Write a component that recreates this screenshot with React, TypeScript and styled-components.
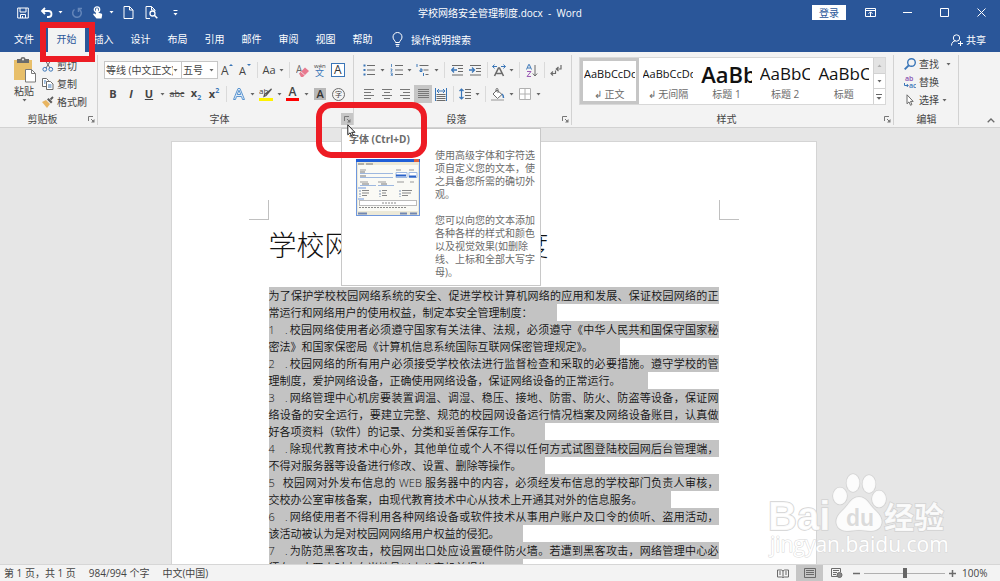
import React from 'react';
import styled, { createGlobalStyle, css } from 'styled-components';

const BLUE = '#2a5699';
const INK = '#444444';
const MUTED = '#6b6b6b';
const ACCENT = '#3a76b8';
const RED = '#ed1c24';

const GlobalStyle = createGlobalStyle`
  * { box-sizing: border-box; }
  body {
    margin: 0;
    font-family: "Open Sans", "Noto Sans CJK SC", sans-serif;
    font-size: 10px;
    line-height: 14px;
    color: ${INK};
  }
  button, select, input { font: inherit; color: inherit; margin: 0; padding: 0; border: 0; background: none; }
  svg { display: block; flex: none; }
`;

/* ---------- shell ---------- */

const Shell = styled.div`
  display: flex;
  flex-direction: column;
  height: 100vh;
  overflow: hidden;
`;

const Header = styled.header`
  background: ${BLUE};
  color: #ffffff;
`;

const TitleBar = styled.div`
  display: grid;
  grid-template-columns: 1fr auto 1fr;
  align-items: center;
  height: 25px;
`;

const DocTitle = styled.h1`
  margin: 0;
  font-size: 10px;
  font-weight: 400;
  line-height: 14px;
`;

const QuickAccess = styled.div`
  display: flex;
  align-items: center;
  padding-left: 10px;
`;

const WindowControls = styled.div`
  display: flex;
  align-items: center;
  justify-content: flex-end;
`;

const IconButton = styled.button<{ $w?: number }>`
  display: flex;
  align-items: center;
  justify-content: center;
  flex: none;
  width: ${(p) => p.$w ?? 18}px;
  height: 18px;
`;

const SignIn = styled.button`
  width: 34px;
  height: 15px;
  margin-right: 6px;
  background: #ffffff;
  color: ${BLUE};
  line-height: 14px;
`;

/* ---------- tabs ---------- */

const TabBar = styled.nav`
  display: flex;
  align-items: stretch;
  height: 27px;
  padding-top: 2px;
`;

const Tab = styled.button<{ $active?: boolean; $w?: number }>`
  position: relative;
  width: ${(p) => p.$w ?? 37}px;
  padding-bottom: 1px;
  ${(p) =>
    p.$active &&
    css`
      background: #f3f3f3;
      color: ${BLUE};
    `}
`;

const TabMark = styled.span`
  position: absolute;
  z-index: 5;
  inset: -5px -10px -10px -8px;
  border: 6px solid ${RED};
`;

const TellMe = styled.button`
  display: flex;
  align-items: center;
  gap: 7px;
  padding-left: 10px;
`;

const Share = styled.button`
  display: flex;
  align-items: center;
  gap: 3px;
  margin-left: auto;
  padding-right: 14px;
`;

/* ---------- ribbon ---------- */

const Ribbon = styled.div`
  display: flex;
  height: 76px;
  background: #f3f3f3;
  border-bottom: 1px solid #d2d2d2;
`;

const Group = styled.section<{ $w: number }>`
  position: relative;
  display: flex;
  flex-direction: column;
  justify-content: space-between;
  flex: none;
  width: ${(p) => p.$w}px;
  &::after {
    content: '';
    position: absolute;
    right: 0;
    top: 3px;
    bottom: 2px;
    width: 1px;
    background: #d2d2d2;
  }
`;

const GroupRows = styled.div`
  display: flex;
  flex-direction: column;
  gap: 6px;
  padding: 9px 0 0 6px;
`;

const Row = styled.div`
  display: flex;
  align-items: center;
  height: 18px;
`;

const GroupFoot = styled.div`
  display: flex;
  align-items: center;
  height: 16px;
`;

const GroupName = styled.h2`
  flex: 1;
  margin: 0;
  font-size: 10px;
  font-weight: 400;
  line-height: 14px;
  text-align: center;
`;

const Launcher = styled.button<{ $hot?: boolean }>`
  display: flex;
  align-items: center;
  justify-content: center;
  width: 12px;
  height: 12px;
  margin-right: 1px;
  background: ${(p) => (p.$hot ? '#c6c6c6' : 'transparent')};
`;

const Anchor = styled.div`
  position: relative;
`;

const Sep = styled.span`
  flex: none;
  width: 1px;
  height: 16px;
  margin: 0 3px;
  background: #dadada;
`;

const ToolButton = styled(IconButton)<{ $on?: boolean }>`
  background: ${(p) => (p.$on ? '#c6c6c6' : 'transparent')};
`;

const Letter = styled.span<{ $bold?: boolean; $italic?: boolean; $line?: string; $size?: number }>`
  font-size: ${(p) => p.$size ?? 11}px;
  line-height: 14px;
  font-weight: ${(p) => (p.$bold ? 700 : 400)};
  font-style: ${(p) => (p.$italic ? 'italic' : 'normal')};
  text-decoration: ${(p) => p.$line ?? 'none'};
  sub, sup { font-size: 7px; line-height: 7px; color: ${ACCENT}; }
`;

const Combo = styled.label<{ $w: number }>`
  display: flex;
  align-items: center;
  width: ${(p) => p.$w}px;
  height: 18px;
  padding-right: 3px;
  border: 1px solid #c6c6c6;
  background: #ffffff;
  & + & { border-left: 0; }
  select {
    flex: 1;
    min-width: 0;
    padding-left: 1px;
    appearance: none;
    overflow: hidden;
    line-height: 14px;
    text-overflow: clip;
  }
`;

const Clipboard = styled.div`
  display: flex;
  gap: 6px;
  padding: 5px 0 0 12px;
`;

const PasteButton = styled.button`
  display: flex;
  flex-direction: column;
  align-items: center;
  width: 24px;
  gap: 1px;
  line-height: 14px;
`;

const Stack = styled.div`
  display: flex;
  flex-direction: column;
`;

const LabelButton = styled.button`
  display: flex;
  align-items: center;
  gap: 3px;
  height: 18px;
  white-space: nowrap;
`;

const SplitCaret = styled.span`
  display: flex;
  padding-left: 4px;
`;

const Gallery = styled.div`
  display: flex;
  height: 48px;
  margin: 5px 0 0 7px;
  width: 307px;
  border: 1px solid #d8d8d8;
  background: #ffffff;
`;

const StyleCard = styled.button<{ $selected?: boolean }>`
  display: flex;
  flex-direction: column;
  justify-content: space-between;
  flex: 1;
  min-width: 0;
  padding: 2px 1px 0;
  overflow: hidden;
  border: 3px solid ${(p) => (p.$selected ? '#c6c6c6' : 'transparent')};
`;

const Sample = styled.span<{ $size: number; $bold?: boolean }>`
  display: block;
  overflow: hidden;
  width: 100%;
  height: 22px;
  font-size: ${(p) => p.$size}px;
  font-weight: ${(p) => (p.$bold ? 600 : 400)};
  line-height: 22px;
  color: #111111;
  text-align: left;
  white-space: nowrap;
`;

const StyleName = styled.span`
  width: 100%;
  color: ${MUTED};
  line-height: 14px;
  text-align: center;
  white-space: nowrap;
`;

const GalleryScroll = styled.div`
  display: flex;
  flex-direction: column;
  width: 12px;
  border-left: 1px solid #d2d2d2;
`;

const ScrollCell = styled.button<{ $off?: boolean }>`
  display: flex;
  align-items: center;
  justify-content: center;
  flex: 1;
  background: ${(p) => (p.$off ? '#e3e3e3' : '#ffffff')};
  & + & { border-top: 1px solid #d2d2d2; }
`;

const EditStack = styled(Stack)`
  padding: 3px 0 0 10px;
`;

const Collapse = styled.button`
  display: flex;
  align-self: flex-end;
  margin: 0 5px 4px auto;
`;

/* ---------- tooltip and callout ---------- */

const Callout = styled.span`
  position: absolute;
  z-index: 12;
  left: -25px;
  top: -11px;
  width: 111px;
  height: 56px;
  border: 6px solid ${RED};
  border-radius: 15px;
`;

const Pointer = styled.span`
  position: absolute;
  z-index: 13;
  left: 6px;
  top: 11px;
`;

const Tooltip = styled.div`
  position: absolute;
  z-index: 10;
  left: 0;
  top: 15px;
  width: 200px;
  height: 158px;
  padding: 3px 7px;
  border: 1px solid #c8c8c8;
  background: #ffffff;
  color: ${MUTED};
`;

const TooltipTitle = styled.strong`
  display: block;
  line-height: 14px;
`;

const TooltipBody = styled.div`
  display: grid;
  grid-template-columns: 64px 100px;
  gap: 15px;
  padding: 3px 0 0 7px;
  svg { margin-top: 10px; }
`;

const TooltipText = styled.p`
  margin: 0 0 13px;
  line-height: 13px;
  white-space: nowrap;
`;

/* ---------- document ---------- */

const Workspace = styled.main`
  position: relative;
  display: flex;
  align-items: flex-start;
  justify-content: center;
  flex: 1;
  min-height: 0;
  overflow: hidden;
  padding: 13px 13px 0 0;
  background: #e6e6e6;
`;

const Sheet = styled.article`
  flex: 0 1 646px;
  padding: 58px 0 40px;
  border: 1px solid #d4d4d4;
  border-bottom: 0;
  background: #ffffff;
`;

const MarginMarks = styled.div`
  display: flex;
  justify-content: space-between;
  padding: 0 77px;
`;

const Corner = styled.span<{ $side: 'left' | 'right' }>`
  width: 20px;
  height: 20px;
  border-bottom: 1px solid #c0c0c0;
  ${(p) => (p.$side === 'left' ? 'border-right' : 'border-left')}: 1px solid #c0c0c0;
`;

const Heading = styled.h3`
  margin: 0 0 18px;
  padding: 0 97px;
  font-family: KaiTi, STKaiti, "Noto Sans CJK SC", serif;
  font-size: 28px;
  font-weight: 300;
  line-height: 49px;
  color: #111111;
  white-space: nowrap;
`;

const Copy = styled.div`
  width: 450px;
  margin: 0 auto;
  font-size: 11px;
  font-weight: 350;
  line-height: 17px;
  color: #111111;
`;

const Line = styled.p<{ $selected?: number }>`
  width: ${(p) => (p.$selected ? `${p.$selected}px` : '100%')};
  height: 17px;
  margin: 0;
  background: #c3c3c3;
  white-space: nowrap;
  text-align: left;
  text-align-last: ${(p) => (p.$selected ? 'left' : 'justify')};
`;

const Marker = styled.span<{ $w: number }>`
  display: inline-flex;
  justify-content: space-between;
  width: ${(p) => p.$w}px;
  padding-right: 2px;
  text-align-last: left;
`;

const Watermark = styled.div`
  position: absolute;
  right: 48px;
  bottom: 0;
`;

/* ---------- status bar ---------- */

const StatusBar = styled.footer`
  display: flex;
  align-items: center;
  flex: none;
  height: 17px;
  padding-left: 4px;
  border-top: 1px solid #d6d6d6;
  background: #f3f3f3;
  white-space: nowrap;
`;

const StatusItems = styled.div`
  display: flex;
  gap: 13px;
`;

const ViewControls = styled.div`
  display: flex;
  align-items: center;
  height: 16px;
  margin-left: auto;
`;

const ViewButton = styled.button<{ $on?: boolean }>`
  display: flex;
  align-items: center;
  justify-content: center;
  width: 27px;
  height: 16px;
  background: ${(p) => (p.$on ? '#c6c6c6' : 'transparent')};
`;

const ZoomRange = styled.input`
  appearance: none;
  width: 81px;
  height: 14px;
  margin: 0 2px;
  background: linear-gradient(#b0b0b0, #b0b0b0) center / 100% 1px no-repeat;
  &::-webkit-slider-thumb {
    appearance: none;
    width: 4px;
    height: 10px;
    background: #666666;
  }
`;

const ZoomValue = styled.output`
  width: 38px;
  margin-left: 5px;
`;

/* ---------- icons ---------- */

const Svg = ({ w, h, children, stroke = MUTED }: { w: number; h: number; children: React.ReactNode; stroke?: string }) => (
  <svg width={w} height={h} viewBox={`0 0 ${w} ${h}`} fill="none" stroke={stroke} strokeWidth={1} aria-hidden="true">
    {children}
  </svg>
);

const Caret = ({ color = '#666666' }: { color?: string }) => (
  <Svg w={5} h={3} stroke="none">
    <path d="M0.5 0h4L2.5 2.6z" fill={color} />
  </Svg>
);

const Drop = ({ label, color }: { label: string; color?: string }) => (
  <IconButton $w={9} aria-label={label}>
    <Caret color={color} />
  </IconButton>
);

const LauncherIcon = () => (
  <Svg w={7} h={7} stroke="#777777">
    <path d="M.5 5V.5H5M3 3l2.500 2.500" />
    <path d="M6.500 3v3.500H3z" fill="#777777" stroke="none" />
  </Svg>
);

const SaveIcon = () => (
  <Svg w={12} h={12} stroke="#ffffff">
    <path d="M.7 1h10.600v10H.7zM3 1v4h6V1M3.500 11V7.500h5V11M5.500 9v2" />
  </Svg>
);
const UndoIcon = () => (
  <Svg w={13} h={11} stroke="#ffffff">
    <path d="M2 4h6.500a3 3 0 0 1 0 6H7M5 1L2 4l3 3" strokeWidth={1.8} />
  </Svg>
);
const RedoIcon = () => (
  <Svg w={12} h={12} stroke="#6486ba">
    <path d="M8 2.200A4.300 4.300 0 1 1 3.500 2.500M7.500 5V1.500H11" strokeWidth={1.5} />
  </Svg>
);
const TouchIcon = () => (
  <Svg w={12} h={13} stroke="#ffffff">
    <circle cx="5" cy="3.500" r="2.700" strokeWidth={1.300} />
    <path d="M3.800 3.500a1.200 1.200 0 0 1 2.400 0V6.800l3 .8c.8.2 1 .7 1 1.400L9.500 12.500h-5L1.300 8.700c-.5-.9.6-1.700 1.400-1L3.800 8.600z" fill="#ffffff" stroke="none" />
  </Svg>
);
const PageIcon = () => (
  <Svg w={11} h={13} stroke="#ffffff">
    <path d="M1 .5h5.500l3.500 3.500v8.500H1zM6.500.5V4H10" />
  </Svg>
);
const PreviewIcon = () => (
  <Svg w={13} h={13} stroke="#ffffff">
    <path d="M5 12.500H1V.5h5.500L10 4v1M6.500.5V4H10" />
    <circle cx="7.500" cy="7.500" r="2.500" strokeWidth={1.3} />
    <path d="M9.300 9.300l3 3" strokeWidth={1.600} />
  </Svg>
);
const CustomizeIcon = () => (
  <Svg w={5} h={6} stroke="#ffffff">
    <path d="M.5.5h4" />
    <path d="M.5 3h4L2.500 5.500z" fill="#ffffff" stroke="none" />
  </Svg>
);
const RibbonOptionsIcon = () => (
  <Svg w={11} h={9} stroke="#ffffff">
    <path d="M.5.5h10v8H.5zM.5 2.500h10M5.500 8V4M3.500 5.800l2-2 2 2" />
  </Svg>
);
const BulbIcon = () => (
  <Svg w={13} h={15} stroke="#ffffff">
    <path d="M4.500 10.500c0-2-2.500-2.500-2.500-5.500a4.500 4.500 0 0 1 9 0c0 3-2.500 3.500-2.500 5.500zM4.500 12.500h4M5 14.200h3" />
  </Svg>
);
const PersonIcon = () => (
  <Svg w={12} h={12} stroke="#ffffff">
    <circle cx="5.500" cy="4" r="3.200" />
    <path d="M.5 11.500c0-3 2-4.500 4-4.700M9.500 7v5M7 9.500h5" />
  </Svg>
);
const PasteIcon = () => (
  <Svg w={24} h={26} stroke="none">
    <rect x="2" y="3" width="18" height="20" fill="#e8bf6a" />
    <path d="M5 2h3.500a2.500 2 0 0 1 5 0H17v4H5z" fill="#6b6b6b" />
    <circle cx="11" cy="2.500" r="1" fill="#f3f3f3" />
    <path d="M13.500 12.500h6l4 4v8.500h-10z" fill="#ffffff" stroke="#7a7a7a" />
    <path d="M19.500 12.500v4h4" stroke="#7a7a7a" />
  </Svg>
);
const CutIcon = () => (
  <Svg w={12} h={12}>
    <path d="M3 0l5 8M9 0L4 8" />
    <circle cx="2.800" cy="9.300" r="1.900" stroke={ACCENT} />
    <circle cx="8.800" cy="9.300" r="1.900" stroke={ACCENT} />
  </Svg>
);
const CopyIcon = () => (
  <Svg w={12} h={12}>
    <path d="M.5.5h4l2 2V8.500h-6z" fill="#ffffff" />
    <path d="M4.500 3.500h4l2.500 2.500v5.500H4.500z" fill="#ffffff" />
    <path d="M6 7h3.500M6 9h3.500M2 3h2M2 5h1.500" stroke={ACCENT} />
  </Svg>
);
const BrushIcon = () => (
  <Svg w={12} h={12} stroke="none">
    <path d="M0 6l4-2 4 4-3 4z" fill="#e8b562" />
    <path d="M5 3.500l1.500-1.500 4 4L9 7.500z" fill="#5a5a5a" />
    <path d="M8.500 3.500L11 1" stroke="#5a5a5a" strokeWidth={1.800} />
  </Svg>
);
const EraserIcon = () => (
  <Svg w={13} h={13} stroke="none">
    <text x="0" y="9" fontSize="10" fill={MUTED}>A</text>
    <path d="M3 9.500l6-6 4 3.500-6 6H5z" fill="#e8798f" />
    <path d="M4.800 7.700l4 3.500" stroke="#f3f3f3" strokeWidth={0.800} />
  </Svg>
);
const PhoneticIcon = () => (
  <Svg w={14} h={14} stroke="none">
    <text x="1" y="5" fontSize="6" fill={INK}>wén</text>
    <text x="2" y="13" fontSize="9" fill={ACCENT}>文</text>
  </Svg>
);
const BoxedA = () => (
  <Svg w={14} h={14} stroke={ACCENT}>
    <rect x=".5" y=".5" width="13" height="13" fill="#ffffff" />
    <text x="3" y="11" fontSize="12" stroke="none" fill="#333333">A</text>
  </Svg>
);
const GrowA = ({ down }: { down?: boolean }) => (
  <Svg w={14} h={14} stroke="none">
    <text x="1" y="12" fontSize={down ? 11 : 12} fill={INK}>A</text>
    <path d={down ? 'M9 1h4l-2 2z' : 'M9 3h4l-2-2z'} fill={ACCENT} />
  </Svg>
);
const OutlineA = () => (
  <Svg w={14} h={14} stroke="#5b95d0">
    <path d="M1.500 12.500L6 1.500h2l4.500 11h-2L9.500 9.500h-5l-1 3zM5.200 7.500h3.600L7 3.200z" fill="#e2eefa" />
  </Svg>
);
const HighlightIcon = () => (
  <Svg w={14} h={14} stroke="none">
    <text x="0" y="7" fontSize="8" fill={INK}>ab</text>
    <path d="M12.500 2L7 8.500l-2 1 .5-2z" stroke="#555555" strokeWidth={1.200} />
    <rect x="0" y="11" width="14" height="3" fill="#fff200" />
  </Svg>
);
const FontColorIcon = () => (
  <Svg w={14} h={14} stroke="none">
    <text x="2.500" y="9" fontSize="12" fontWeight="600" fill={INK}>A</text>
    <rect x="0" y="11" width="13" height="3" fill="#ff0000" />
  </Svg>
);
const ShadeA = () => (
  <Svg w={12} h={12} stroke="none">
    <rect width="12" height="12" fill="#b8b8b8" />
    <text x="2.500" y="10" fontSize="11" fontWeight="600" fill="#333333">A</text>
  </Svg>
);
const CircledChar = () => (
  <Svg w={13} h={13}>
    <circle cx="6.500" cy="6.500" r="6" />
    <text x="3" y="9" fontSize="7" stroke="none" fill={INK}>字</text>
  </Svg>
);
const BulletsIcon = () => (
  <Svg w={13} h={12}>
    <path d="M4 1.500h8M4 6h8M4 10.500h8" />
    <path d="M.5 1.500h2M.5 6h2M.5 10.500h2" stroke={ACCENT} strokeWidth={2} />
  </Svg>
);
const NumberingIcon = () => (
  <Svg w={13} h={12}>
    <path d="M5 1.500h8M5 6h8M5 10.500h8" />
    <path d="M1.500 0v3M.5 5h1.500v1L.8 7.200h1.500M.5 9h1.700v3H.5M1 10.500h1" stroke={ACCENT} strokeWidth={0.800} />
  </Svg>
);
const MultilevelIcon = () => (
  <Svg w={14} h={12}>
    <path d="M3.500 1.500h9M7.500 6h5M9.500 10.500h3" />
    <path d="M1 0v3M4 5h2v2.500H4V6h2M7.500 9v3" stroke={ACCENT} />
  </Svg>
);
const IndentIcon = ({ right }: { right?: boolean }) => (
  <Svg w={13} h={11}>
    <path d="M1 .5h11M7 3.500h5M7 6.500h5M1 10h11" />
    <path d={right ? 'M0 5h5M3 2.500L5.500 5 3 7.500' : 'M1 5h5M3 2.500L.7 5 3 7.500'} stroke={ACCENT} strokeWidth={1.300} />
  </Svg>
);
const AsianLayoutIcon = () => (
  <Svg w={14} h={13}>
    <path d="M2.500 12L6.500 4h1l4 8M4.500 9.500h5" strokeWidth={1.600} />
    <path d="M.5 2.500h4.500M9 2.500h4.500M2.500.5L.7 2.500l1.800 2M11.500.5l1.800 2-1.800 2" stroke={ACCENT} />
  </Svg>
);
const SortIcon = () => (
  <Svg w={12} h={13}>
    <path d="M.5 5.500L2.700.5h.6L5.500 5.500M1.500 4h3" stroke={ACCENT} />
    <path d="M1 7.500h4l-4 5h4" stroke="#9b5bb5" />
    <path d="M9 1v11M6.800 9.500L9 12l2.200-2.500" />
  </Svg>
);
const MarksIcon = () => (
  <Svg w={12} h={12}>
    <path d="M11 1v4H6.500M8.500 3L6.300 5l2.200 2M5.500 6.500v3H1M3 7.500l-2 2 2 2" strokeWidth={1.200} />
  </Svg>
);
const AlignIcon = ({ kind }: { kind: 'left' | 'center' | 'right' | 'full' }) => {
  const d = {
    left: 'M0 .5h10M0 3.500h7M0 6.500h10M0 9.500h7',
    center: 'M0 .5h10M2 3.500h6M0 6.500h10M2 9.500h6',
    right: 'M0 .5h10M3 3.500h7M0 6.500h10M3 9.500h7',
    full: 'M0 .5h11M0 2.500h11M0 4.500h11M0 6.500h11M0 8.500h11',
  }[kind];
  return (
    <Svg w={11} h={10} stroke="#777777">
      <path d={d} />
    </Svg>
  );
};
const DistributeIcon = () => (
  <Svg w={12} h={13}>
    <path d="M1.500 6.500h9M1.500 8.500h9M1.500 10.500h9M1.500 12.500h9" />
    <path d="M.5 0v13M11.500 0v13M2 3h8M4 1L2 3l2 2M8 1l2 2-2 2" stroke={ACCENT} />
  </Svg>
);
const SpacingIcon = () => (
  <Svg w={12} h={12}>
    <path d="M6 1.500h6M6 4.500h6M6 7.500h6M6 10.500h6" />
    <path d="M2.500 1v10M.5 3l2-2 2 2M.5 9l2 2 2-2" stroke={ACCENT} strokeWidth={1.200} />
  </Svg>
);
const BucketIcon = () => (
  <Svg w={14} h={13}>
    <path d="M6 2l5 4.500-4.500 4L2 6zM5 4V1.500a1 1 0 0 1 2 0V5" fill="#ffffff" />
    <path d="M11 6c1.500 1 1.500 2 1.500 4" stroke={ACCENT} strokeWidth={1.500} />
    <path d="M0 12h13" strokeWidth={1.500} stroke="#b5b5b5" />
  </Svg>
);
const BordersIcon = () => (
  <Svg w={12} h={12} stroke="#b0b0b0">
    <path d="M.5.500h11v11H.5zM6 .5v11M.5 6h11" fill="#ffffff" />
  </Svg>
);
const FindIcon = () => (
  <Svg w={12} h={12} stroke={ACCENT}>
    <circle cx="7.500" cy="4.500" r="3.800" strokeWidth={1.400} />
    <path d="M4.700 7.300L.7 11.300" strokeWidth={1.900} />
  </Svg>
);
const ReplaceIcon = () => (
  <Svg w={12} h={13} stroke="none">
    <text x="1" y="5" fontSize="7" fontWeight="600" fill="#8a4fb0">ab</text>
    <text x="5" y="12" fontSize="7" fontWeight="600" fill={ACCENT}>ac</text>
    <path d="M.5 7v2.500H4M2.800 8l1.500 1.500L2.800 11" stroke={ACCENT} />
  </Svg>
);
const SelectIcon = () => (
  <Svg w={12} h={12}>
    <path d="M3 .8v9l2-1.900 1.500 3.400 1.400-.7L6.500 7.400h2.700z" fill="#ffffff" />
  </Svg>
);
const PointerIcon = () => (
  <Svg w={10} h={13} stroke="#222222">
    <path d="M.8.8v10l2.300-2 1.600 3.600 1.600-.8-1.600-3.300h3.200z" fill="#ffffff" />
  </Svg>
);

const DialogThumb = () => (
  <Svg w={64} h={57} stroke="none">
    <rect x=".5" y=".5" width="63" height="56" fill="#ece9d8" stroke="#6f97dd" />
    <rect width="64" height="3" fill="#1f5fd8" />
    <rect x="58" y="0" width="5" height="3" fill="#e0603c" />
    <rect x="2" y="6" width="60" height="46" fill="#fafaf5" />
    <path d="M2 5h6M10 5h7" stroke="#777777" />
    <path d="M4 11h6M40 11h5M53 11h5M4 23h8M22 23h8M41 23h7M54 23h4" stroke="#999999" />
    <path d="M4 14.500h33M4 18.500h33M4 26.500h16M22 26.500h16" stroke="#9db8e0" />
    <path d="M4 13h5M4 17h6M6 25h7M25 25h6" stroke="#777777" />
    <path d="M40 13.500h11v5H40zM53 13.500h8v5h-8z" stroke="#9db8e0" fill="#ffffff" />
    <path d="M40 16.500h10M53 17.500h7" stroke="#2a62c8" strokeWidth={2} />
    <path d="M2 29h8M2 40h6" stroke="#6f97dd" />
    <path d="M6 31.500h7M6 34h7M6 36.500h5M26 31.500h5M26 34h4M26 36.500h5M46 31.500h10M46 34h9M46 36.500h6" stroke="#888888" />
    <path d="M4 31v7M24 31v7M44 31v7" stroke="#7d93b5" strokeDasharray="2 1" />
    <rect x="3.500" y="41.500" width="57" height="5" fill="#ffffff" stroke="#bbbbbb" />
    <path d="M26 44h14M3 48.500h48" stroke="#888888" strokeDasharray="2 1" />
    <path d="M2 54.500h9M44 54.500h7M54 54.500h7" stroke="#7287b0" strokeWidth={2} />
  </Svg>
);

const ReadIcon = () => (
  <Svg w={12} h={9}>
    <path d="M6 1.500v7M.5 1h4L6 2l1.500-1h4v7h-4L6 9 4.500 8h-4zM2 3h2M2 5h2M8 3h2M8 5h2" />
  </Svg>
);
const PrintViewIcon = () => (
  <Svg w={12} h={10}>
    <path d="M.5.5h11v9H.5zM2 2.500h8M2 4.500h8M2 6.500h8" />
  </Svg>
);
const WebViewIcon = () => (
  <Svg w={12} h={10}>
    <path d="M6 8.500H.5v-8h9V4M2 2.500h6M2 4.500h4M2 6.500h3" />
    <circle cx="8.500" cy="7" r="2.500" fill="#8a8a8a" />
  </Svg>
);

const BaiduMark = () => (
  <svg width={188} height={92} viewBox="0 0 188 92" aria-label="Baidu 经验" role="img">
    <g
      fill="#ffffff"
      fillOpacity={0.85}
      stroke="#d2d2d2"
      strokeWidth={1.5}
      fontFamily='"Liberation Sans", "Noto Sans CJK SC", sans-serif'
      fontWeight={700}
      paintOrder="stroke"
    >
      <text x="4" y="58" fontSize="40">Bai</text>
      <ellipse cx="76" cy="24" rx="7" ry="8.500" />
      <ellipse cx="89" cy="11" rx="6.500" ry="9" />
      <ellipse cx="105" cy="12" rx="6.500" ry="9" />
      <ellipse cx="115" cy="27" rx="7" ry="8.500" />
      <path d="M95 25c8 0 10 8 17 14 10 9 6 20-5 20-5 0-8-1-12-1s-7 1-12 1c-11 0-15-11-5-20 7-6 9-14 17-14z" />
      <text x="82" y="54" fontSize="23" fill="#d6d6d6" stroke="none">du</text>
      <text x="120" y="56" fontSize="30">经验</text>
    </g>
    <text
      x="6"
      y="80"
      fontFamily='"Open Sans", sans-serif'
      fontSize="21"
      fill="#ffffff"
      stroke="#d8d8d8"
      strokeWidth={1}
      paintOrder="stroke"
    >
      jingyan.baidu.com
    </text>
  </svg>
);

/* ---------- data ---------- */

const TABS = ['插入', '设计', '布局', '引用', '邮件', '审阅', '视图', '帮助'];

const STYLES = [
  { name: '↲ 正文', sample: 'AaBbCcDd', size: 11, selected: true },
  { name: '↲ 无间隔', sample: 'AaBbCcDd', size: 11 },
  { name: '标题 1', sample: 'AaBb', size: 22, bold: true },
  { name: '标题 2', sample: 'AaBbC', size: 17 },
  { name: '标题', sample: 'AaBbC', size: 17 },
];

type DocLine = { text: string; num?: string; dot?: boolean; selected?: number };

const LINES: DocLine[] = [
  { text: '为了保护学校校园网络系统的安全、促进学校计算机网络的应用和发展、保证校园网络的正' },
  { text: '常运行和网络用户的使用权益，制定本安全管理制度：', selected: 288 },
  { num: '1', dot: true, text: '校园网络使用者必须遵守国家有关法律、法规，必须遵守《中华人民共和国保守国家秘' },
  { text: '密法》和国家保密局《计算机信息系统国际互联网保密管理规定》。', selected: 351 },
  { num: '2', dot: true, text: '校园网络的所有用户必须接受学校依法进行监督检查和采取的必要措施。遵守学校的管' },
  { text: '理制度，爱护网络设备，正确使用网络设备，保证网络设备的正常运行。', selected: 379 },
  { num: '3', dot: true, text: '网络管理中心机房要装置调温、调湿、稳压、接地、防雷、防火、防盗等设备，保证网' },
  { text: '络设备的安全运行，要建立完整、规范的校园网设备运行情况档案及网络设备账目，认真做' },
  { text: '好各项资料（软件）的记录、分类和妥善保存工作。', selected: 276 },
  { num: '4', dot: true, text: '除现代教育技术中心外，其他单位或个人不得以任何方式试图登陆校园网后台管理端，' },
  { text: '不得对服务器等设备进行修改、设置、删除等操作。', selected: 276 },
  { num: '5', text: '校园网对外发布信息的 WEB 服务器中的内容，必须经发布信息的学校部门负责人审核，' },
  { text: '交校办公室审核备案，由现代教育技术中心从技术上开通其对外的信息服务。', selected: 402 },
  { num: '6', dot: true, text: '网络使用者不得利用各种网络设备或软件技术从事用户账户及口令的侦听、盗用活动，' },
  { text: '该活动被认为是对校园网网络用户权益的侵犯。', selected: 254 },
  { num: '7', dot: true, text: '为防范黑客攻击，校园网出口处应设置硬件防火墙。若遭到黑客攻击，网络管理中心必' },
  { text: '须在二十四小时内向当地县以上公安机关报告。', selected: 254 },
];

/* ---------- sections ---------- */

const ClipboardGroup = () => (
  <Group $w={98}>
    <Clipboard>
      <PasteButton>
        <PasteIcon />
        粘贴
        <Caret />
      </PasteButton>
      <Stack>
        <LabelButton><CutIcon />剪切</LabelButton>
        <LabelButton><CopyIcon />复制</LabelButton>
        <LabelButton><BrushIcon />格式刷</LabelButton>
      </Stack>
    </Clipboard>
    <GroupFoot>
      <GroupName>剪贴板</GroupName>
      <Launcher aria-label="剪贴板选项"><LauncherIcon /></Launcher>
    </GroupFoot>
  </Group>
);

const FontGroup = () => (
  <Group $w={256}>
    <GroupRows>
      <Row>
        <Combo $w={78}>
          <select aria-label="字体" defaultValue="dx"><option value="dx">等线 (中文正文)</option></select>
          <Caret />
        </Combo>
        <Combo $w={36}>
          <select aria-label="字号" defaultValue="5"><option value="5">五号</option></select>
          <Caret />
        </Combo>
        <ToolButton aria-label="增大字号"><GrowA /></ToolButton>
        <ToolButton aria-label="减小字号"><GrowA down /></ToolButton>
        <Sep />
        <ToolButton $w={16}><Letter>Aa</Letter></ToolButton>
        <Drop label="更改大小写" />
        <Sep />
        <ToolButton aria-label="清除格式"><EraserIcon /></ToolButton>
        <ToolButton aria-label="拼音指南"><PhoneticIcon /></ToolButton>
        <ToolButton aria-label="字符边框"><BoxedA /></ToolButton>
      </Row>
      <Row>
        <ToolButton><Letter $bold>B</Letter></ToolButton>
        <ToolButton><Letter $bold $italic>I</Letter></ToolButton>
        <ToolButton><Letter $bold $line="underline">U</Letter></ToolButton>
        <Drop label="下划线样式" />
        <ToolButton $w={20}><Letter $size={9} $line="line-through">abc</Letter></ToolButton>
        <ToolButton><Letter $bold>x<sub>2</sub></Letter></ToolButton>
        <ToolButton><Letter $bold>x<sup>2</sup></Letter></ToolButton>
        <Sep />
        <ToolButton aria-label="文本效果"><OutlineA /></ToolButton>
        <Drop label="更多文本效果" />
        <ToolButton aria-label="突出显示"><HighlightIcon /></ToolButton>
        <Drop label="突出显示颜色" />
        <ToolButton aria-label="字体颜色"><FontColorIcon /></ToolButton>
        <Drop label="更多字体颜色" />
        <ToolButton aria-label="字符底纹"><ShadeA /></ToolButton>
        <ToolButton aria-label="带圈字符"><CircledChar /></ToolButton>
      </Row>
    </GroupRows>
    <GroupFoot>
      <GroupName>字体</GroupName>
      <Anchor>
        <Launcher $hot aria-label="字体选项"><LauncherIcon /></Launcher>
        <Tooltip role="tooltip">
          <TooltipTitle>字体 (Ctrl+D)</TooltipTitle>
          <TooltipBody>
            <DialogThumb />
            <div>
              <TooltipText>
                使用高级字体和字符选<br />项自定义您的文本，使<br />之具备您所需的确切外<br />观。
              </TooltipText>
              <TooltipText>
                您可以向您的文本添加<br />各种各样的样式和颜色<br />以及视觉效果(如删除<br />线、上标和全部大写字<br />母)。
              </TooltipText>
            </div>
          </TooltipBody>
        </Tooltip>
        <Callout />
        <Pointer><PointerIcon /></Pointer>
      </Anchor>
    </GroupFoot>
  </Group>
);

const ParagraphGroup = () => (
  <Group $w={218}>
    <GroupRows>
      <Row>
        <ToolButton aria-label="项目符号"><BulletsIcon /></ToolButton>
        <Drop label="项目符号库" />
        <ToolButton aria-label="编号"><NumberingIcon /></ToolButton>
        <Drop label="编号库" />
        <ToolButton aria-label="多级列表"><MultilevelIcon /></ToolButton>
        <Drop label="多级列表库" />
        <Sep />
        <ToolButton aria-label="减少缩进量"><IndentIcon /></ToolButton>
        <ToolButton aria-label="增加缩进量"><IndentIcon right /></ToolButton>
        <Sep />
        <ToolButton $w={16} aria-label="中文版式"><AsianLayoutIcon /></ToolButton>
        <Drop label="更多中文版式" />
        <Sep />
        <ToolButton aria-label="排序"><SortIcon /></ToolButton>
        <Sep />
        <ToolButton $w={16} aria-label="显示编辑标记"><MarksIcon /></ToolButton>
      </Row>
      <Row>
        <ToolButton aria-label="左对齐"><AlignIcon kind="left" /></ToolButton>
        <ToolButton aria-label="居中"><AlignIcon kind="center" /></ToolButton>
        <ToolButton aria-label="右对齐"><AlignIcon kind="right" /></ToolButton>
        <ToolButton $on aria-label="两端对齐"><AlignIcon kind="full" /></ToolButton>
        <ToolButton aria-label="分散对齐"><DistributeIcon /></ToolButton>
        <Sep />
        <ToolButton $w={16} aria-label="行距"><SpacingIcon /></ToolButton>
        <Drop label="行距选项" />
        <Sep />
        <ToolButton aria-label="底纹"><BucketIcon /></ToolButton>
        <Drop label="底纹颜色" />
        <ToolButton aria-label="边框"><BordersIcon /></ToolButton>
        <Drop label="边框选项" />
      </Row>
    </GroupRows>
    <GroupFoot>
      <GroupName>段落</GroupName>
      <Launcher aria-label="段落选项"><LauncherIcon /></Launcher>
    </GroupFoot>
  </Group>
);

const StylesGroup = () => (
  <Group $w={322}>
    <Gallery>
      {STYLES.map((s) => (
        <StyleCard key={s.name} $selected={s.selected}>
          <Sample $size={s.size} $bold={s.bold}>{s.sample}</Sample>
          <StyleName>{s.name}</StyleName>
        </StyleCard>
      ))}
      <GalleryScroll>
        <ScrollCell $off aria-label="上一行">
          <Svg w={5} h={3} stroke="none"><path d="M.5 3h4L2.500.4z" fill="#b0b0b0" /></Svg>
        </ScrollCell>
        <ScrollCell aria-label="下一行"><Caret /></ScrollCell>
        <ScrollCell aria-label="其他样式">
          <Svg w={6} h={6} stroke="#666666"><path d="M0 .5h6" /><path d="M.5 3h5L3 5.800z" fill="#666666" stroke="none" /></Svg>
        </ScrollCell>
      </GalleryScroll>
    </Gallery>
    <GroupFoot>
      <GroupName>样式</GroupName>
      <Launcher aria-label="样式选项"><LauncherIcon /></Launcher>
    </GroupFoot>
  </Group>
);

const EditingGroup = () => (
  <Group $w={65}>
    <EditStack>
      <LabelButton><FindIcon />查找<SplitCaret><Caret /></SplitCaret></LabelButton>
      <LabelButton><ReplaceIcon />替换</LabelButton>
      <LabelButton><SelectIcon />选择<Caret /></LabelButton>
    </EditStack>
    <GroupFoot>
      <GroupName>编辑</GroupName>
    </GroupFoot>
  </Group>
);

export default function App() {
  return (
    <Shell lang="zh-CN">
      <GlobalStyle />
      <Header>
        <TitleBar>
          <QuickAccess>
            <IconButton $w={26} aria-label="保存"><SaveIcon /></IconButton>
            <IconButton $w={20} aria-label="撤消"><UndoIcon /></IconButton>
            <Drop label="撤消列表" color="#ffffff" />
            <IconButton $w={24} aria-label="重复"><RedoIcon /></IconButton>
            <IconButton aria-label="触摸模式"><TouchIcon /></IconButton>
            <Drop label="触摸模式选项" color="#ffffff" />
            <IconButton $w={24} aria-label="新建"><PageIcon /></IconButton>
            <IconButton $w={22} aria-label="打印预览"><PreviewIcon /></IconButton>
            <IconButton $w={26} aria-label="自定义快速访问工具栏"><CustomizeIcon /></IconButton>
          </QuickAccess>
          <DocTitle>学校网络安全管理制度.docx&nbsp; -&nbsp; Word</DocTitle>
          <WindowControls>
            <SignIn>登录</SignIn>
            <IconButton $w={37} aria-label="功能区显示选项"><RibbonOptionsIcon /></IconButton>
            <IconButton $w={37} aria-label="最小化">
              <Svg w={9} h={9} stroke="#ffffff"><path d="M0 4.500h9" /></Svg>
            </IconButton>
            <IconButton $w={37} aria-label="最大化">
              <Svg w={9} h={9} stroke="#ffffff"><path d="M.5.500h8v8h-8z" /></Svg>
            </IconButton>
            <IconButton $w={37} aria-label="关闭">
              <Svg w={9} h={9} stroke="#ffffff"><path d="M.5.500l8 8M8.500.5l-8 8" /></Svg>
            </IconButton>
          </WindowControls>
        </TitleBar>
        <TabBar>
          <Tab $w={48}>文件</Tab>
          <Tab $active>
            开始
            <TabMark />
          </Tab>
          {TABS.map((t) => (
            <Tab key={t}>{t}</Tab>
          ))}
          <TellMe><BulbIcon />操作说明搜索</TellMe>
          <Share><PersonIcon />共享</Share>
        </TabBar>
      </Header>

      <Ribbon>
        <ClipboardGroup />
        <FontGroup />
        <ParagraphGroup />
        <StylesGroup />
        <EditingGroup />
        <Collapse aria-label="折叠功能区">
          <Svg w={8} h={5}><path d="M.7 4.300L4 1l3.300 3.300" strokeWidth={1.300} /></Svg>
        </Collapse>
      </Ribbon>

      <Workspace>
        <Sheet>
          <MarginMarks>
            <Corner $side="left" />
            <Corner $side="right" />
          </MarginMarks>
          <Heading>学校网络安全管理制度</Heading>
          <Copy>
            {LINES.map((line) => (
              <Line key={line.text} $selected={line.selected}>
                {line.num && (
                  <Marker $w={line.dot ? 21 : 14}>
                    <span>{line.num}</span>
                    {line.dot && <span>.</span>}
                  </Marker>
                )}
                {line.text}
              </Line>
            ))}
          </Copy>
        </Sheet>
        <Watermark><BaiduMark /></Watermark>
      </Workspace>

      <StatusBar>
        <StatusItems>
          <span>第 1 页，共 1 页</span>
          <span>984/994 个字</span>
          <span>中文(中国)</span>
        </StatusItems>
        <ViewControls>
          <ViewButton aria-label="阅读视图"><ReadIcon /></ViewButton>
          <ViewButton $on aria-label="页面视图"><PrintViewIcon /></ViewButton>
          <ViewButton aria-label="Web 版式视图"><WebViewIcon /></ViewButton>
          <IconButton $w={12} aria-label="缩小">
            <Svg w={7} h={7}><path d="M0 3.500h7" strokeWidth={1.500} /></Svg>
          </IconButton>
          <ZoomRange type="range" min={0} max={200} defaultValue={100} aria-label="显示比例" />
          <IconButton $w={10} aria-label="放大">
            <Svg w={7} h={7}><path d="M0 3.500h7M3.500 0v7" strokeWidth={1.500} /></Svg>
          </IconButton>
          <ZoomValue>100%</ZoomValue>
        </ViewControls>
      </StatusBar>
    </Shell>
  );
}
